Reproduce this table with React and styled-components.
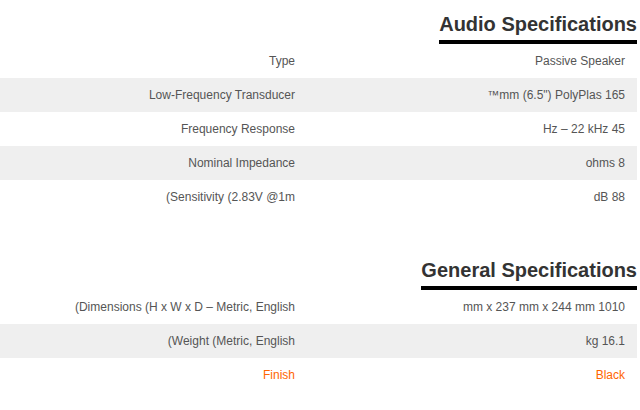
import React from 'react';
import styled, { createGlobalStyle } from 'styled-components';

const GlobalStyle = createGlobalStyle`
  html, body {
    margin: 0;
    padding: 0;
    background: #fff;
  }
  body {
    font-family: "Liberation Sans", Arial, sans-serif;
  }
`;

// spec rows as the page shows them (the source page renders them right-to-left)
const audioSpecs = [
  ['Type', 'Passive Speaker'],
  ['Low-Frequency Transducer', '™mm (6.5") PolyPlas 165'],
  ['Frequency Response', 'Hz – 22 kHz 45'],
  ['Nominal Impedance', 'ohms 8'],
  ['(Sensitivity (2.83V @1m', 'dB 88'],
];

const generalSpecs = [
  ['(Dimensions (H x W x D – Metric, English', 'mm x 237 mm x 244 mm 1010'],
  ['(Weight (Metric, English', 'kg 16.1'],
  ['Finish', 'Black', true],
];

const Page = styled.div`
  width: 637px;
  padding-top: 13px;
`;

const Section = styled.section`
  & + & {
    margin-top: 45px;
  }
`;

const HeadingRow = styled.div`
  display: flex;
  justify-content: flex-end;
`;

const Heading = styled.h2`
  margin: 0;
  font-size: 20px;
  line-height: 22px;
  font-weight: 700;
  color: #333;
  padding-bottom: 5px;
  border-bottom: 4px solid #000;
`;

const SpecRow = styled.div`
  display: grid;
  grid-template-columns: 307px 1fr;
  height: 34px;
  background: ${props => (props.shaded ? '#efefef' : '#fff')};
`;

const Cell = styled.div`
  display: flex;
  align-items: center;
  justify-content: flex-end;
  padding: 0 12px;
  font-size: 12px;
  color: ${props => (props.highlight ? '#ff6600' : '#555')};
  white-space: nowrap;
`;

const SpecSection = ({ title, specs }) => (
  <Section>
    <HeadingRow>
      <Heading>{title}</Heading>
    </HeadingRow>
    {specs.map(([label, value, highlight], i) => (
      <SpecRow key={label} shaded={i % 2 === 1}>
        <Cell highlight={highlight}>{label}</Cell>
        <Cell highlight={highlight}>{value}</Cell>
      </SpecRow>
    ))}
  </Section>
);

const App = () => (
  <>
    <GlobalStyle />
    <Page>
      <SpecSection title="Audio Specifications" specs={audioSpecs} />
      <SpecSection title="General Specifications" specs={generalSpecs} />
    </Page>
  </>
);

export default App;
